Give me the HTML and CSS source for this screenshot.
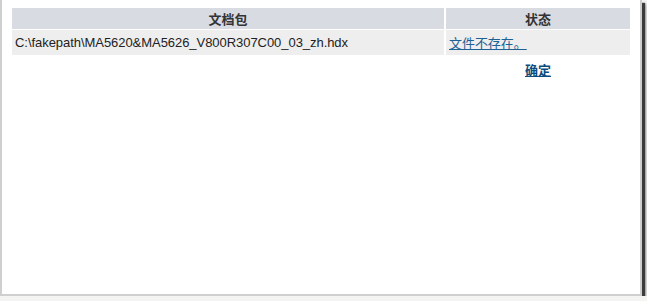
FILE: index.html
```html
<!DOCTYPE html>
<html lang="zh-CN">
<head>
  <meta charset="UTF-8">
  <title>文档包状态</title>
  <link rel="stylesheet" href="styles.css">
</head>
<body>
  <div class="frame">
    <table class="pkg-table">
      <thead>
        <tr>
          <th class="col-pkg">文档包</th>
          <th class="col-state">状态</th>
        </tr>
      </thead>
      <tbody>
        <tr class="data-row">
          <td>C:\fakepath\MA5620&amp;MA5626_V800R307C00_03_zh.hdx</td>
          <td><a href="#" class="state-link">文件不存在。</a></td>
        </tr>
        <tr class="action-row">
          <td></td>
          <td><a href="#" class="ok-btn">确定</a></td>
        </tr>
      </tbody>
    </table>
  </div>
</body>
</html>
```

FILE: styles.css
```css
body {
  margin: 0;
  background: #f4f4f2;
  font-family: "Liberation Sans", Arial, "Noto Sans CJK SC", sans-serif;
  font-size: 13px;
  color: #222;
}

/* 截图外框：左右下灰边 + 阴影 */
.frame {
  box-sizing: border-box;
  width: 642px;
  height: 296px;
  padding: 8px 0 0 10px;
  background: #fff;
  border: 2px solid #cfcfcf;
  border-top: none;
  box-shadow: 3px 3px 1px #3c3c3c, 4px 4px 3px rgba(0, 0, 0, 0.35);
}

.pkg-table {
  width: 622px;
  border-collapse: separate;
  border-spacing: 2px 1px;
  margin-left: -2px;
  margin-top: -1px;
}

.pkg-table th {
  background: #d9dbe3;
  color: #333;
  font-weight: bold;
  font-size: 13px;
  height: 21px;
  padding: 0;
  text-align: center;
}

.col-pkg {
  width: 432px;
}

.data-row td {
  background: #eeeeee;
  height: 25px;
  padding: 0 3px;
  vertical-align: middle;
  letter-spacing: -0.05px;
}

.state-link {
  color: #1d6195;
  text-decoration: underline;
}

.action-row td {
  height: 27px;
  padding: 0;
  text-align: center;
  vertical-align: middle;
}

.ok-btn {
  color: #0f4c7e;
  font-weight: bold;
  text-decoration: underline;
}
```
